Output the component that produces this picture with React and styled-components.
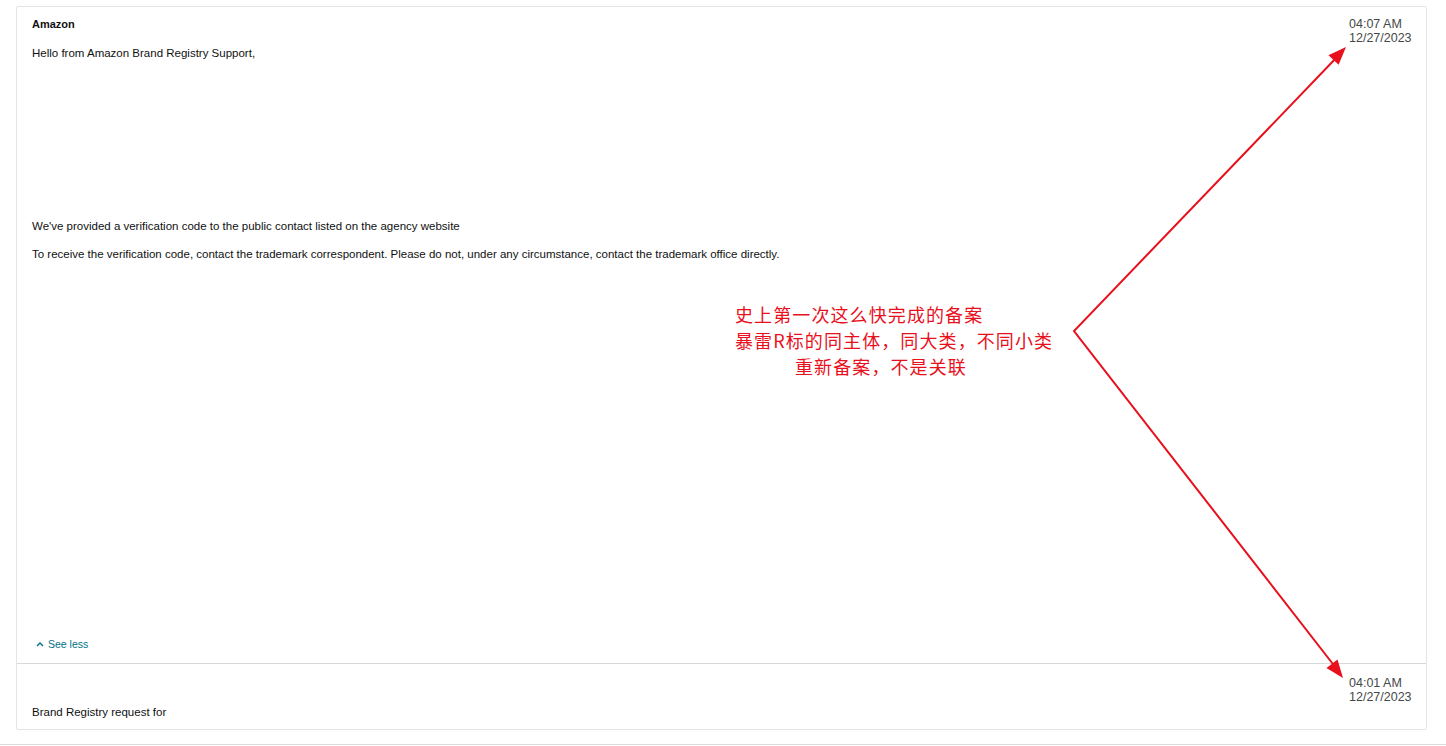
import React from "react";
import styled, { createGlobalStyle } from "styled-components";

const Global = createGlobalStyle`
  html, body { margin: 0; padding: 0; background: #fff; }
  body { font-family: "Liberation Sans", Arial, sans-serif; color: #0f1111; }
`;

const Page = styled.div`
  position: relative;
  width: 1446px;
  height: 746px;
  overflow: hidden;
  padding-top: 6px;
  box-sizing: border-box;
`;

const Card = styled.div`
  margin-left: 16px;
  width: 1411px;
  box-sizing: border-box;
  border: 1px solid #e3e6e6;
  border-radius: 2px;
`;

const Message = styled.section`
  padding: ${(p) => p.$pad};
  border-top: ${(p) => (p.$divider ? "1px solid #d5d9d9" : "none")};
`;

const Header = styled.div`
  display: flex;
  justify-content: space-between;
  align-items: flex-start;
`;

const Sender = styled.div`
  font-size: 11px;
  line-height: 14px;
  font-weight: 700;
  color: #0f1111;
`;

const Stamp = styled.div`
  font-size: 12.5px;
  line-height: 14px;
  color: #444848;
  width: 62px;
  white-space: nowrap;
`;

const Para = styled.p`
  margin: ${(p) => p.$mt || 0}px 0 0 0;
  font-size: 11.5px;
  line-height: 14px;
  color: #0f1111;
`;

const SeeLess = styled.a`
  display: flex;
  align-items: center;
  gap: 4px;
  margin-top: ${(p) => p.$mt}px;
  margin-left: 4px;
  font-size: 10.5px;
  line-height: 14px;
  color: #007185;
  text-decoration: none;
  cursor: pointer;
`;

const Footer = styled.div`
  margin-top: 14px;
  border-top: 1px solid #dcdcdc;
  height: 20px;
`;

const Note = styled.div`
  position: absolute;
  left: 735px;
  top: 301px;
  font-family: "Noto Sans CJK SC", "Microsoft YaHei", sans-serif;
  font-size: 18px;
  letter-spacing: 1.1px;
  line-height: 26.2px;
  color: #e8101c;
  white-space: nowrap;
`;

const NoteLine = styled.div`
  padding-left: ${(p) => p.$indent || 0}px;
`;

const Arrows = styled.svg`
  position: absolute;
  left: 0;
  top: 0;
  pointer-events: none;
`;

function ArrowHead({ x, y, fx, fy }) {
  const dx = x - fx;
  const dy = y - fy;
  const len = Math.hypot(dx, dy);
  const ux = dx / len;
  const uy = dy / len;
  const L = 18;
  const W = 7;
  const bx = x - ux * L;
  const by = y - uy * L;
  const px = -uy * W;
  const py = ux * W;
  return (
    <polygon
      points={`${x},${y} ${bx + px},${by + py} ${bx - px},${by - py}`}
      fill="#e8101c"
    />
  );
}

export default function App() {
  const apex = { x: 1074, y: 331 };
  const top = { x: 1346, y: 47 };
  const bot = { x: 1343, y: 678 };
  return (
    <>
      <Global />
      <Page>
        <Card>
          <Message $pad="10px 15px 12px 15px">
            <Header>
              <Sender>Amazon</Sender>
              <Stamp>
                04:07 AM
                <br />
                12/27/2023
              </Stamp>
            </Header>
            <Para $mt={1}>Hello from Amazon Brand Registry Support,</Para>
            <Para $mt={159}>
              We've provided a verification code to the public contact listed on the agency website
            </Para>
            <Para $mt={14}>
              To receive the verification code, contact the trademark correspondent. Please do not, under any circumstance, contact the trademark office directly.
            </Para>
            <SeeLess $mt={376}>
              <svg width="8" height="6" viewBox="0 0 8 6">
                <path d="M1 5 L4 2 L7 5" fill="none" stroke="#007185" strokeWidth="1.4" />
              </svg>
              See less
            </SeeLess>
          </Message>
          <Message $divider $pad="12px 15px 10px 15px">
            <Header>
              <span />
              <Stamp>
                04:01 AM
                <br />
                12/27/2023
              </Stamp>
            </Header>
            <Para $mt={1}>Brand Registry request for</Para>
          </Message>
        </Card>
        <Footer />
        <Note>
          <NoteLine>史上第一次这么快完成的备案</NoteLine>
          <NoteLine>暴雷R标的同主体，同大类，不同小类</NoteLine>
          <NoteLine $indent={60}>重新备案，不是关联</NoteLine>
        </Note>
        <Arrows width="1446" height="746" viewBox="0 0 1446 746">
          <polyline
            points={`${top.x - 8},${top.y + 9} ${apex.x},${apex.y} ${bot.x - 7},${bot.y - 10}`}
            fill="none"
            stroke="#e8101c"
            strokeWidth="2"
          />
          <ArrowHead x={top.x} y={top.y} fx={apex.x} fy={apex.y} />
          <ArrowHead x={bot.x} y={bot.y} fx={apex.x} fy={apex.y} />
        </Arrows>
      </Page>
    </>
  );
}
